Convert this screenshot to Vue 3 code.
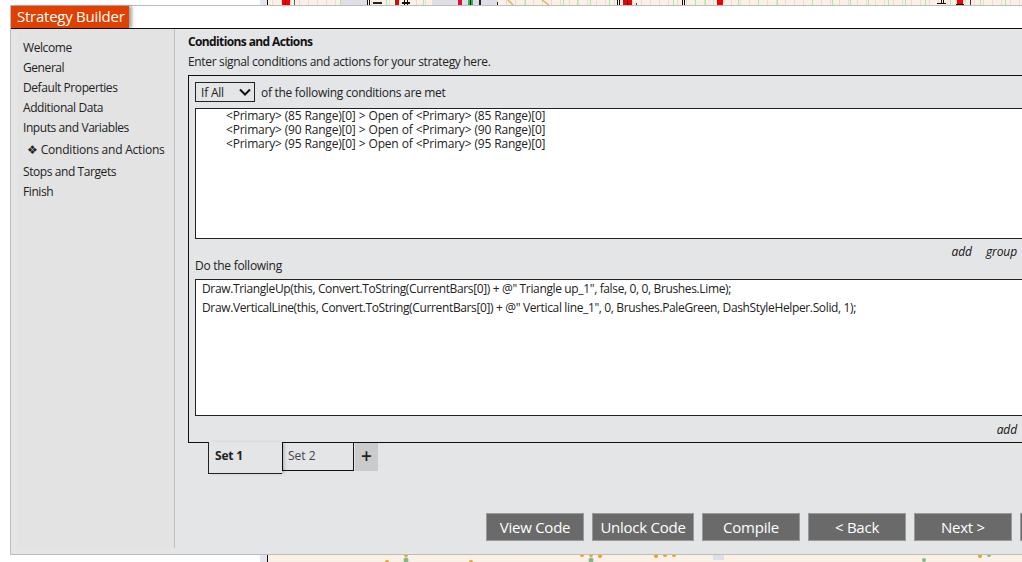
<script setup>
const menu = [
  { label: 'Welcome' },
  { label: 'General' },
  { label: 'Default Properties' },
  { label: 'Additional Data' },
  { label: 'Inputs and Variables' },
  { label: 'Conditions and Actions', active: true },
  { label: 'Stops and Targets' },
  { label: 'Finish' },
]
const conditions = [
  '<Primary> (85 Range)[0] > Open of <Primary> (85 Range)[0]',
  '<Primary> (90 Range)[0] > Open of <Primary> (90 Range)[0]',
  '<Primary> (95 Range)[0] > Open of <Primary> (95 Range)[0]',
]
const actions = [
  'Draw.TriangleUp(this, Convert.ToString(CurrentBars[0]) + @" Triangle up_1", false, 0, 0, Brushes.Lime);',
  'Draw.VerticalLine(this, Convert.ToString(CurrentBars[0]) + @" Vertical line_1", 0, Brushes.PaleGreen, DashStyleHelper.Solid, 1);',
]
const buttons = ['View Code', 'Unlock Code', 'Compile', '< Back', 'Next >']
const gridLines = Array.from({ length: 84 }, (_, i) => 272 + i * 9)
const greenTop = [340, 386, 423, 525, 563, 577, 590, 609, 673, 695, 705, 738, 758, 777, 812, 832, 850, 868, 888, 905, 925, 950, 980, 1005]
// [x, y, width, height, colour]
const marks = [
  [282, 0, 8, 5, '#f00000'], [285, 0, 1, 5, '#a00000'],
  [294, 0, 1, 5, '#6b5b55'],
  [367, 0, 1, 5, '#111'], [369, 0, 1, 5, '#111'],
  [373, 2, 9, 2, '#222'],
  [395, 0, 1, 5, '#444'], [396, 0, 3, 5, '#f00000'],
  [402, 2, 8, 2, '#111'], [404, 0, 1, 5, '#111'], [407, 0, 1, 5, '#111'],
  [458, 0, 4, 5, '#e01030'], [468, 0, 5, 5, '#2fb24a'], [470, 0, 1, 5, '#111'],
  [479, 0, 2, 5, '#222'], [497, 2, 1, 3, '#222'],
  [617, 0, 1, 5, '#111'], [619, 0, 1, 5, '#111'],
  [623, 0, 9, 5, '#f00000'], [627, 0, 1, 5, '#222'],
  [636, 3, 1, 2, '#444'],
  [682, 0, 1, 5, '#111'], [684, 0, 1, 5, '#111'],
  [717, 0, 6, 5, '#f00000'],
  [941, 0, 1, 3, '#111'], [943, 0, 1, 3, '#111'], [937, 3, 9, 1, '#111'],
  [957, 0, 6, 4, '#f00000'], [956, 4, 8, 1, '#111'],
  [970, 0, 1, 5, '#333'],
]
const dots = [
  [406, 555, '#e8a020', 2], [406, 560, '#86b98a', 2.5], [387, 562, '#e8a020', 2], [471, 562, '#e8a020', 2],
  [582, 555, '#e8a020', 2], [591, 555, '#e8a020', 2], [591, 560, '#86b98a', 2.5], [600, 556, '#e8a020', 2],
  [656, 556, '#e8a020', 2], [665, 555, '#e8a020', 2], [674, 555, '#e8a020', 2],
  [924, 560, '#86b98a', 2], [980, 556, '#e8a020', 2], [989, 555, '#86b98a', 2],
]
</script>

<template>
  <div class="desk">
    <svg class="chart" width="1022" height="562" viewBox="0 0 1022 562">
      <rect x="260" y="0" width="762" height="562" fill="#e4e6ec" />
      <rect x="267" y="0" width="755" height="562" fill="#fbf0e6" />
      <rect x="267" y="0" width="1" height="562" fill="#111" />
      <rect x="340" y="0" width="27" height="5" fill="#dde0e8" />
      <rect x="432" y="0" width="66" height="5" fill="#dde0e8" />
      <rect x="713" y="555" width="11" height="5" fill="#dde0e8" />
      <rect v-for="x in gridLines" :key="'g' + x" :x="x" y="0" width="1" height="5" fill="#eadcd2" />
      <rect v-for="x in greenTop" :key="'l' + x" :x="x" y="0" width="1" height="5" fill="#a6ef9a" />
      <rect v-for="m in marks" :key="m.join()" :x="m[0]" :y="m[1]" :width="m[2]" :height="m[3]" :fill="m[4]" />
      <path d="M508 0l5 5M542 0l7 5" fill="none" stroke="#e0b060" stroke-width="1.5" />
      <circle v-for="d in dots" :key="d.join()" :cx="d[0]" :cy="d[1]" :r="d[3]" :fill="d[2]" />
    </svg>

    <section class="window">
      <header class="title-row">
        <h1 class="title">Strategy Builder</h1>
      </header>
      <div class="body">
        <nav class="side">
          <div
            v-for="item in menu"
            :key="item.label"
            class="side-item"
            :class="{ active: item.active }"
          >
            <span v-if="item.active" class="bullet">❖</span>{{ item.label }}
          </div>
        </nav>
        <main class="main">
          <h2 class="heading">Conditions and Actions</h2>
          <p class="sub">Enter signal conditions and actions for your strategy here.</p>

          <div class="panel">
            <div class="cond-row">
              <div class="select">
                <span>If All</span>
                <svg width="12" height="8" viewBox="0 0 12 8">
                  <path d="M1 1.5 6 6.5l5-5" fill="none" stroke="#111" stroke-width="2" />
                </svg>
              </div>
              <span class="cond-text">of the following conditions are met</span>
            </div>
            <div class="box box-cond">
              <div v-for="c in conditions" :key="c" class="cond-line">{{ c }}</div>
            </div>
            <div class="links links-top">
              <em>add</em><em>group</em>
            </div>
            <div class="do-label">Do the following</div>
            <div class="box box-act">
              <div v-for="a in actions" :key="a" class="act-line">{{ a }}</div>
            </div>
            <div class="links links-bottom">
              <em>add</em>
            </div>
          </div>

          <div class="tabs">
            <div class="tab tab-on">Set 1</div>
            <div class="tab tab-off">Set 2</div>
            <div class="tab-add">+</div>
          </div>

          <div class="actions">
            <button v-for="b in buttons" :key="b" class="btn" :class="{ wide: b === 'Unlock Code' }">{{ b }}</button>
            <button class="btn stub"></button>
          </div>
        </main>
      </div>
    </section>
  </div>
</template>

<style>
html, body { margin: 0; background: #fff; }
</style>

<style scoped>
.desk {
  position: relative;
  width: 1022px;
  height: 562px;
  overflow: hidden;
  background: #fff;
  font-family: "Open Sans", "Noto Sans", sans-serif;
  color: #222;
}
.chart { position: absolute; left: 0; top: 0; }
.window {
  position: absolute;
  left: 10px;
  top: 5px;
  width: 1040px;
  height: 550px;
  box-sizing: border-box;
  border: 1px solid #bdbdbd;
  background: #e4e5e7;
  display: flex;
  flex-direction: column;
}
.title-row {
  height: 22px;
  background: #fff;
  border-bottom: 1px solid #111;
  flex: none;
  display: flex;
}
.title {
  margin: 0;
  width: 118px;
  height: 22px;
  background: #e04000;
  color: #fff;
  font-size: 15px;
  font-weight: 400;
  line-height: 20px;
  padding-left: 6px;
  box-sizing: border-box;
  box-shadow: 3px 0 3px rgba(0,0,0,.35);
  letter-spacing: -.25px;
  white-space: nowrap;
}
.body { flex: 1; display: flex; min-height: 0; }
.side {
  width: 157px;
  margin-left: 6px;
  background: #e3e3e3;
  border-right: 1px solid #c0c0c0;
  padding-top: 9px;
  height: 510px;
  flex: none;
}
.side-item {
  height: 20px;
  line-height: 20px;
  padding-left: 6px;
  font-size: 12px;
  letter-spacing: -.42px;
  white-space: nowrap;
}
.side-item.active {
  height: 24px;
  line-height: 24px;
  padding-left: 10px;
  letter-spacing: -.22px;
}
.bullet { font-size: 12px; margin-right: 3px; font-family: "DejaVu Sans", sans-serif; letter-spacing: 0; }
.main {
  flex: 1;
  padding: 5px 0 0 13px;
  min-width: 0;
}
.heading {
  margin: 0;
  font-size: 12px;
  line-height: 16px;
  font-weight: 700;
  color: #111;
  letter-spacing: -.62px;
}
.sub {
  margin: 4px 0 5px;
  font-size: 12px;
  line-height: 16px;
  letter-spacing: -.34px;
}
.panel {
  box-sizing: border-box;
  width: 860px;
  height: 368px;
  border: 1px solid #111;
  padding: 6px 0 0 6px;
}
.cond-row {
  display: flex;
  align-items: center;
  gap: 6px;
  height: 20px;
}
.select {
  box-sizing: border-box;
  width: 60px;
  height: 20px;
  border: 1px solid #222;
  display: flex;
  align-items: center;
  justify-content: space-between;
  padding: 0 3px 0 5px;
  font-size: 12px;
  letter-spacing: -.2px;
}
.cond-text { font-size: 12px; letter-spacing: -.29px; }
.box {
  box-sizing: border-box;
  width: 840px;
  background: #fff;
  border: 1px solid #222;
}
.box-cond { margin-top: 6px; height: 131px; padding: 0 0 0 30px; }
.cond-line {
  font-size: 12px;
  line-height: 14px;
  letter-spacing: -.22px;
  word-spacing: .3px;
  white-space: pre;
}
.links {
  display: flex;
  justify-content: flex-end;
  gap: 14px;
  font-size: 12px;
  letter-spacing: -.1px;
  color: #111;
}
.links-top { height: 20px; line-height: 25px; width: 822px; }
.links-bottom { height: 20px; line-height: 28px; width: 822px; }
.do-label { height: 20px; line-height: 14px; font-size: 12px; letter-spacing: -.27px; }
.box-act { height: 137px; padding: 0 0 0 6px; }
.act-line {
  font-size: 12px;
  line-height: 18.6px;
  letter-spacing: -.36px;
  white-space: pre;
}
.tabs {
  display: flex;
  align-items: flex-start;
  margin-left: 20px;
  margin-top: -1px;
  position: relative;
  height: 31px;
}
.tab { box-sizing: border-box; font-size: 12px; }
.tab-on {
  width: 74px;
  height: 32px;
  border: 1px solid #222;
  border-top: 0;
  border-right: 0;
  background: #e4e5e7;
  padding: 5px 0 0 6px;
  font-weight: 700;
  letter-spacing: -.2px;
  position: relative;
  box-shadow: 3px 0 3px -1px rgba(0,0,0,.25);
}
.tab-off {
  width: 72px;
  height: 29px;
  border: 1px solid #111;
  padding: 4px 0 0 5px;
  color: #444;
}
.tab-add {
  margin-left: 1px;
  margin-top: 1px;
  width: 23px;
  height: 28px;
  background: #cbcbcb;
  text-align: center;
  font-size: 19px;
  line-height: 26px;
  font-weight: 600;
}
.actions {
  display: flex;
  gap: 8px;
  margin-top: 40px;
  margin-left: 298px;
}
.btn {
  box-sizing: border-box;
  width: 98px;
  height: 28px;
  flex: none;
  background: #6a6a6a;
  border: 1px solid #9a9a9a;
  color: #fff;
  font-family: inherit;
  font-size: 15px;
  padding: 0;
  letter-spacing: -.25px;
}
.btn.wide { width: 102px; }
</style>
